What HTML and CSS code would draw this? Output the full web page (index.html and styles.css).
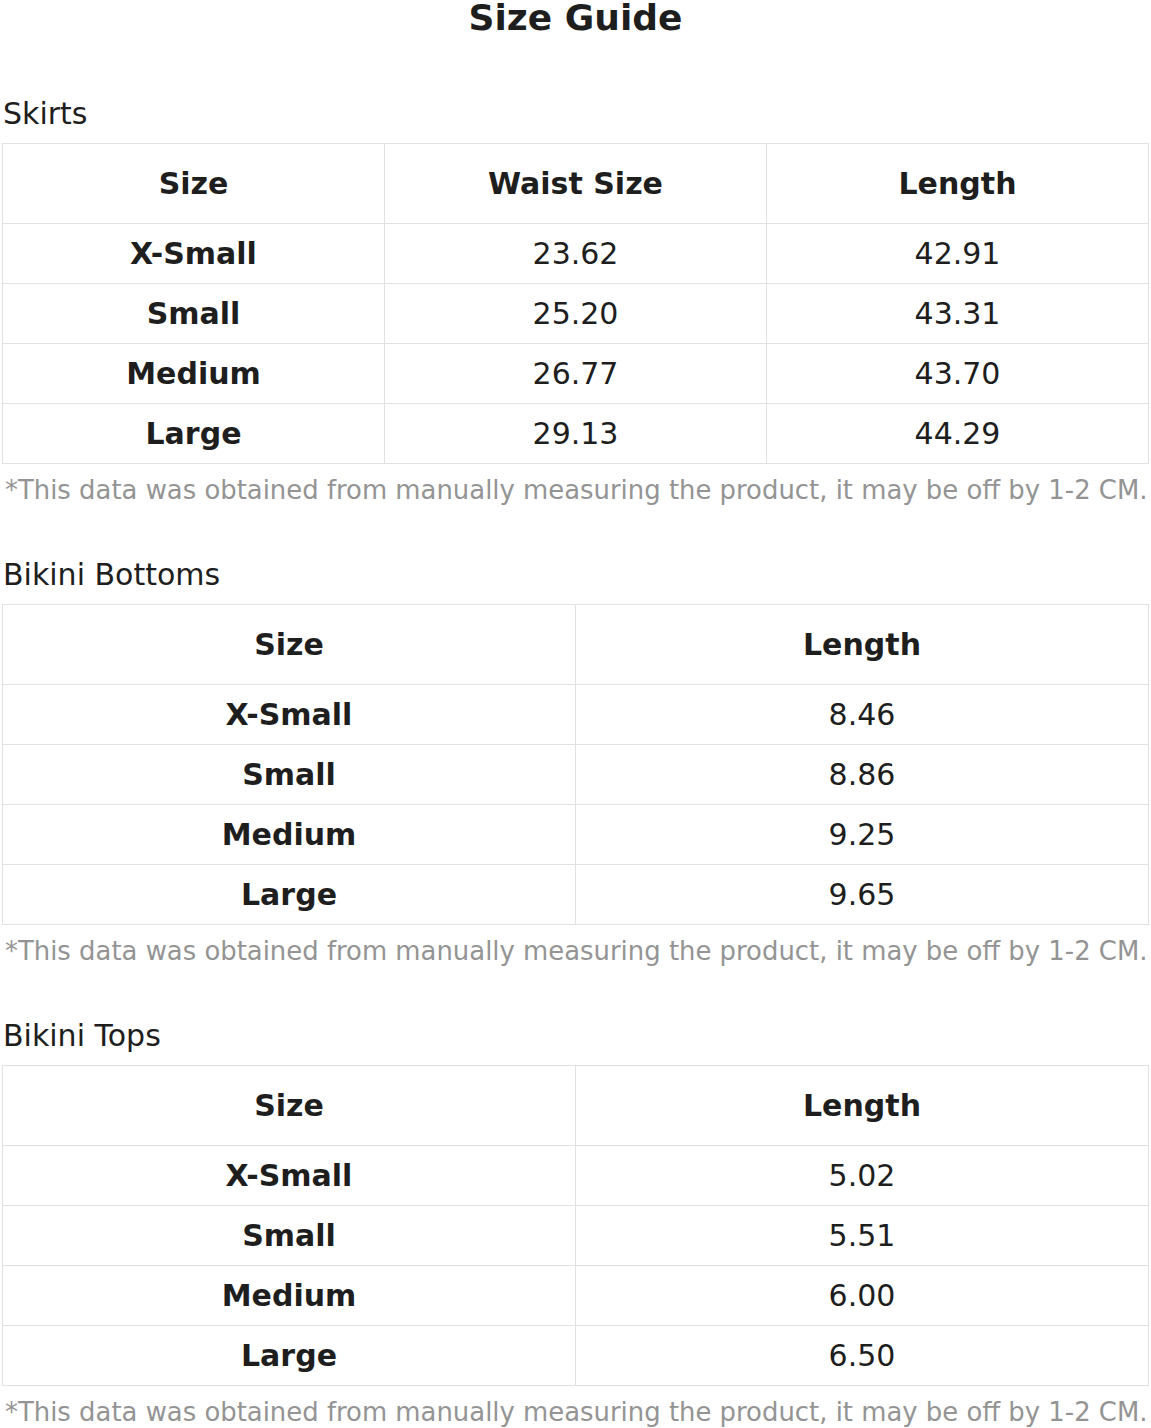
FILE: index.html
```html
<!DOCTYPE html>
<html>
<head>
<meta charset="utf-8">
<link rel="stylesheet" href="styles.css">
</head>
<body>
<div class="page">
  <h1 class="title">Size Guide</h1>

  <section class="section">
    <h2 class="section-title">Skirts</h2>
    <table class="size-table">
      <thead>
        <tr><th>Size</th><th>Waist Size</th><th>Length</th></tr>
      </thead>
      <tbody>
        <tr><th>X-Small</th><td>23.62</td><td>42.91</td></tr>
        <tr><th>Small</th><td>25.20</td><td>43.31</td></tr>
        <tr><th>Medium</th><td>26.77</td><td>43.70</td></tr>
        <tr><th>Large</th><td>29.13</td><td>44.29</td></tr>
      </tbody>
    </table>
    <p class="note">*This data was obtained from manually measuring the product, it may be off by 1-2 CM.</p>
  </section>

  <section class="section">
    <h2 class="section-title">Bikini Bottoms</h2>
    <table class="size-table">
      <thead>
        <tr><th>Size</th><th>Length</th></tr>
      </thead>
      <tbody>
        <tr><th>X-Small</th><td>8.46</td></tr>
        <tr><th>Small</th><td>8.86</td></tr>
        <tr><th>Medium</th><td>9.25</td></tr>
        <tr><th>Large</th><td>9.65</td></tr>
      </tbody>
    </table>
    <p class="note">*This data was obtained from manually measuring the product, it may be off by 1-2 CM.</p>
  </section>

  <section class="section">
    <h2 class="section-title">Bikini Tops</h2>
    <table class="size-table">
      <thead>
        <tr><th>Size</th><th>Length</th></tr>
      </thead>
      <tbody>
        <tr><th>X-Small</th><td>5.02</td></tr>
        <tr><th>Small</th><td>5.51</td></tr>
        <tr><th>Medium</th><td>6.00</td></tr>
        <tr><th>Large</th><td>6.50</td></tr>
      </tbody>
    </table>
    <p class="note">*This data was obtained from manually measuring the product, it may be off by 1-2 CM.</p>
  </section>
</div>
</body>
</html>
```

FILE: styles.css
```css
html, body {
  margin: 0;
  padding: 0;
  background: #ffffff;
}

body {
  font-family: "DejaVu Sans", "Liberation Sans", sans-serif;
  color: #1e1e1e;
}

.page {
  width: 1147px;
  padding: 0 2px;
}

.title {
  margin: -2px 0 0 0;
  font-size: 36px;
  line-height: 40px;
  font-weight: bold;
  text-align: center;
}

.section {
  margin-top: 53px;
}

.section + .section {
  margin-top: 42px;
}

.section-title {
  margin: 0 0 0 1px;
  font-size: 30px;
  font-weight: normal;
  line-height: 46px;
  height: 52px;
}

.size-table {
  width: 100%;
  border-collapse: collapse;
  table-layout: fixed;
  font-size: 30px;
}

.size-table th,
.size-table td {
  border: 1px solid #e2e2e2;
  text-align: center;
  padding: 0;
  height: 59px;
}

.size-table th {
  font-weight: bold;
}

.size-table thead th {
  height: 79px;
}

.note {
  margin: 6px 0 0 3px;
  font-size: 25.9px;
  line-height: 40px;
  color: #949494;
  white-space: nowrap;
}
```
